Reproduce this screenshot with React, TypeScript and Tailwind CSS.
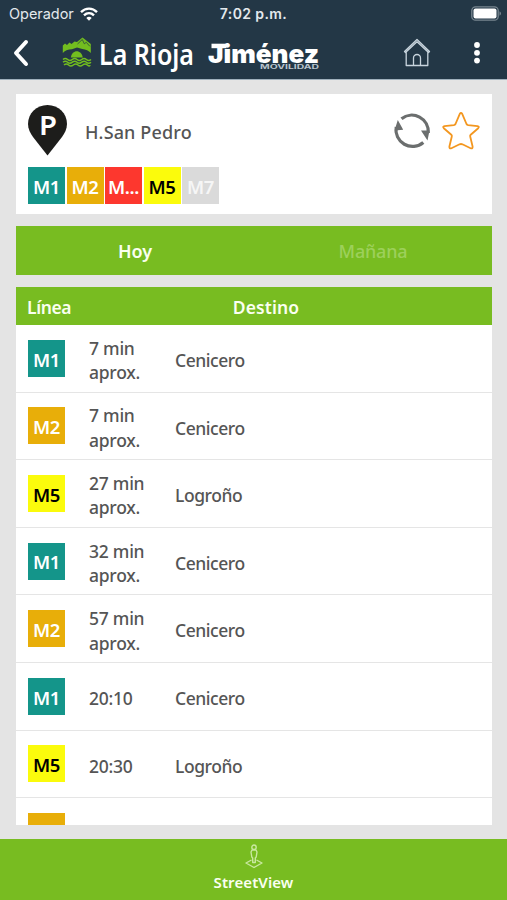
import React from "react";

const tones = {
  teal: "bg-[#14958a] text-white",
  amber: "bg-[#e8ae09] text-white",
  red: "bg-[#fd372e] text-white",
  yellow: "bg-[#fbfb0c] text-black",
  gray: "bg-[#dadada] text-[#f6f6f6]",
};
type Tone = keyof typeof tones;

function Badge({ label, tone }: { label: string; tone: Tone }) {
  return (
    <span className={`flex h-[37px] w-[37px] shrink-0 items-center justify-center pt-[3px] text-[18.5px] leading-none font-semibold tracking-[-0.4px] ${tones[tone]}`}>
      {label}
    </span>
  );
}

const stopLines: [string, Tone][] = [
  ["M1", "teal"],
  ["M2", "amber"],
  ["M...", "red"],
  ["M5", "yellow"],
  ["M7", "gray"],
];

const departures: { line: string; tone: Tone; time: string; dest: string }[] = [
  { line: "M1", tone: "teal", time: "7 min aprox.", dest: "Cenicero" },
  { line: "M2", tone: "amber", time: "7 min aprox.", dest: "Cenicero" },
  { line: "M5", tone: "yellow", time: "27 min aprox.", dest: "Logroño" },
  { line: "M1", tone: "teal", time: "32 min aprox.", dest: "Cenicero" },
  { line: "M2", tone: "amber", time: "57 min aprox.", dest: "Cenicero" },
  { line: "M1", tone: "teal", time: "20:10", dest: "Cenicero" },
  { line: "M5", tone: "yellow", time: "20:30", dest: "Logroño" },
];

function StatusBar() {
  return (
    <div className="grid h-[27px] grid-cols-3 items-center pr-[5px] pl-[9px] font-['Inter',sans-serif] text-[#e3e9ed]">
      <div className="flex items-center gap-[6px]">
        <span className="text-[14.5px] tracking-[-0.04px]">Operador</span>
        <svg width="18" height="14" viewBox="0 0 18 14" fill="none" stroke="white" strokeWidth="2.4">
          <path d="M1 5.1C5.6.5 12.4.5 17 5.1" />
          <path d="M4 8.3c2.9-2.8 7.1-2.8 10 0" />
          <path d="M6.3 10.9c1.6-1.5 3.8-1.5 5.4 0L9 13.7z" fill="white" stroke="none" />
        </svg>
      </div>
      <span className="-ml-[4px] text-center text-[14px] font-semibold tracking-[0.4px]">7:02 p.m.</span>
      <svg className="justify-self-end" width="31" height="15" viewBox="0 0 31 15">
        <rect x=".8" y=".8" width="26.4" height="13.4" rx="3.8" fill="none" stroke="#788690" strokeWidth="1.3" />
        <rect x="2.5" y="2.5" width="23" height="10" rx="2" fill="white" />
        <path d="M28.5 5.3c2 .8 2 3.6 0 4.4z" fill="#788690" />
      </svg>
    </div>
  );
}

function NavBar() {
  return (
    <div className="flex h-[52px] items-center">
      <svg className="ml-[12px] shrink-0" width="17" height="30" viewBox="0 0 17 30" fill="none" stroke="white" strokeWidth="4" strokeLinecap="round" strokeLinejoin="round">
        <path d="M14 4 4 15l10 11" />
      </svg>
      <svg className="ml-[33px] shrink-0" width="30" height="32" viewBox="0 0 30 32" fill="#72bd1f">
        <path d="M.8 16V8.500L3 6.500l2 1.500 2.500-2.500L9.500 7l3-2.500L15 5l5.500-4.500L28.800 7v9c-2-2.500-5-3.500-8.500-4L15 10.500l-5 1.700C6 12.500 2.500 13.500.8 16z" />
        <path d="m15.500 7 4.800-4.500 2 4.300 2-1.500 3.500 4" fill="none" stroke="#233746" strokeWidth=".7" />
        <path d="M8.800 20.500C10 12 19.500 12 20.800 20.500z" />
        <path d="M1 22.500q2.300-2 4.600 0t4.700 0 4.700 0 4.700 0 4.700 0 4.600 0M1 25.200q2.300-2 4.600 0t4.700 0 4.700 0 4.700 0 4.700 0 4.600 0M2 28q2.300-2 4.600 0t4.700 0 4.700 0 4.700 0 4.700 0 2.600 0" fill="none" stroke="#72bd1f" strokeWidth="1.500" />
      </svg>
      <svg className="ml-[7px] shrink-0 overflow-visible" width="94" height="36" viewBox="0 0 94 36" fill="white">
        <text x="0" y="30" textLength="95" lengthAdjust="spacingAndGlyphs" fontFamily="Noto Sans" fontSize="28" fontWeight="600">La Rioja</text>
      </svg>
      <div className="ml-[15px] flex h-[36px] w-[113px] shrink-0 flex-col pt-[8px]">
        <svg className="shrink-0 overflow-visible" width="113" height="20" viewBox="0 0 113 20" fill="white">
          <path d="M3.500 .7h15v4.500h-15z" />
          <text x="0" y="19.500" textLength="111" lengthAdjust="spacingAndGlyphs" fontFamily="Inter" fontSize="26" fontWeight="900">Jiménez</text>
        </svg>
        <svg className="shrink-0 overflow-visible" width="113" height="8" viewBox="0 0 113 8" fill="#b9c3cc">
          <text x="52" y="6.300" textLength="59" lengthAdjust="spacingAndGlyphs" fontFamily="Inter" fontSize="6" fontWeight="700">MOVILIDAD</text>
        </svg>
      </div>
      <svg className="ml-[82px] shrink-0" width="28" height="30" viewBox="0 0 28 30" fill="none" stroke="#c8d4dd" strokeWidth="1.3" strokeLinejoin="round" strokeLinecap="round">
        <path d="M1.500 13.500 14 1.500l12.500 12-1 1L14 3.700 2.500 14.500zM3.200 14.500v13h21.600v-13M10.500 27.500V20a3.500 3.500 0 0 1 7 0v7.500" />
      </svg>
      <svg className="ml-[42px] shrink-0" width="8" height="24" viewBox="0 0 8 24" fill="white">
        <circle cx="4" cy="4" r="2.9" />
        <circle cx="4" cy="11.800" r="2.9" />
        <circle cx="4" cy="19.600" r="2.9" />
      </svg>
    </div>
  );
}

function StopCard() {
  return (
    <section className="h-[120px] shrink-0 bg-white px-[12px] pt-[11px]">
      <div className="flex h-[52px] items-center">
        <svg className="shrink-0" width="40" height="52" viewBox="0 0 40 52">
          <path d="M19.500 0C8.500 0 0 8.500 0 19c0 5 2.300 9 5 13l14.500 18.500L34 32c2.700-4 5-8 5-13C39 8.500 30.500 0 19.500 0z" fill="#1d1d1b" />
          <text x="11" y="29.500" fontFamily="Noto Sans" fontSize="26.500" fontWeight="600" textLength="18" lengthAdjust="spacingAndGlyphs" fill="white">P</text>
        </svg>
        <h1 className="ml-[17px] pt-[2px] text-[18px] font-medium tracking-[0.14px] text-[#555]">H.San Pedro</h1>
        <svg className="ml-auto shrink-0" width="38" height="38" viewBox="0 0 38 38" fill="none" stroke="#6b6e6e" strokeWidth="3.200">
          <path d="M8.500 6.700A16.600 16.600 0 0 1 35.300 21" />
          <path d="M30.300 30.500A16.600 16.600 0 0 1 3.200 15" />
          <path d="M4.800 8 10.200 17.800 1.500 18.500zM28 18.500h8.500L34.500 28.500z" fill="#6b6e6e" stroke="none" />
        </svg>
        <svg className="ml-[11px] shrink-0" width="38" height="38" viewBox="0 0 38 38" fill="none" stroke="#f39720" strokeWidth="1.800" strokeLinejoin="round">
          <path d="M17.800 1.800Q19 .2 20.200 1.800L24.500 12Q25 13 26.200 13.200L35.500 14.200Q37.700 14.600 36.200 16.200L28.700 22.700Q27.900 23.500 28.200 24.500L30.600 34.500Q30.800 37.200 28.600 36.200L20.400 32.300Q19 31.700 17.600 32.300L9.400 36.200Q7.200 37.200 7.400 34.500L9.800 24.500Q10.100 23.500 9.300 22.700L1.800 16.200Q.3 14.600 2.500 14.200L11.800 13.200Q13 13 13.500 12z" />
        </svg>
      </div>
      <div className="mt-[10px] flex gap-[1.500px]">
        {stopLines.map(([label, tone]) => (
          <Badge key={label} label={label} tone={tone} />
        ))}
      </div>
    </section>
  );
}

export default function App() {
  return (
    <div className="flex h-[900px] w-[507px] flex-col overflow-hidden bg-[#e4e4e4] font-['Noto_Sans','Open_Sans',sans-serif]">
      <header className="h-[80px] shrink-0 border-b border-[#9fb0bc] bg-[#233746]">
        <StatusBar />
        <NavBar />
      </header>

      <main className="flex min-h-0 flex-1 flex-col pt-[14px] pr-[15px] pb-[14px] pl-[16px]">
        <StopCard />

        <div className="mt-[12px] grid h-[49px] shrink-0 grid-cols-2 items-center bg-[#78bc21] pt-[2px] text-center text-[18px] font-semibold text-[#fafff0]">
          <button>Hoy</button>
          <button className="font-medium tracking-[-0.2px] text-[#9dd05b]">Mañana</button>
        </div>

        <section className="mt-[12px] min-h-0 flex-1 overflow-hidden bg-white">
          <div className="flex h-[38px] items-center bg-[#78bc21] pt-[3px] pl-[11px] text-[17.500px] font-semibold text-[#fafff0]">
            <span className="w-[77px] tracking-[-0.4px]">Línea</span>
            <span className="w-[324px] text-center tracking-[0.100px]">Destino</span>
          </div>
          {departures.map((d) => (
            <div key={`${d.line}-${d.time}`} className="flex h-[67.600px] items-center border-b border-[#e5e5e5] pl-[12px] text-[17.500px] leading-[24.500px] font-medium text-[#555]">
              <Badge label={d.line} tone={d.tone} />
              <span className="ml-[24px] w-[66px] pt-[4px] tracking-[-0.250px]">{d.time}</span>
              <span className="ml-[20px] pt-[4px] tracking-[-0.450px]">{d.dest}</span>
            </div>
          ))}
          <div className="h-[67.600px] pt-[15px] pl-[12px]">
            <div className="h-[37px] w-[37px] bg-[#e8ae09]" />
          </div>
        </section>
      </main>

      <footer className="flex h-[61px] shrink-0 flex-col items-center bg-[#78bc21] pt-[5px] text-[#fafff0]">
        <svg width="18" height="25" viewBox="0 0 18 25" fill="none" stroke="#c9e8a0" strokeWidth="1.400" strokeLinejoin="round">
          <circle cx="9" cy="3.200" r="2.200" />
          <path d="M7 6h4l1 2-.8 5-.9 1v4.500H7.700V14l-.9-1L6 8zM6.500 16 1 19l8 4.500 8-4.500-5.500-3" />
        </svg>
        <span className="mt-[2px] text-[15px] leading-[22px] font-semibold tracking-[0.100px]">StreetView</span>
      </footer>
    </div>
  );
}
